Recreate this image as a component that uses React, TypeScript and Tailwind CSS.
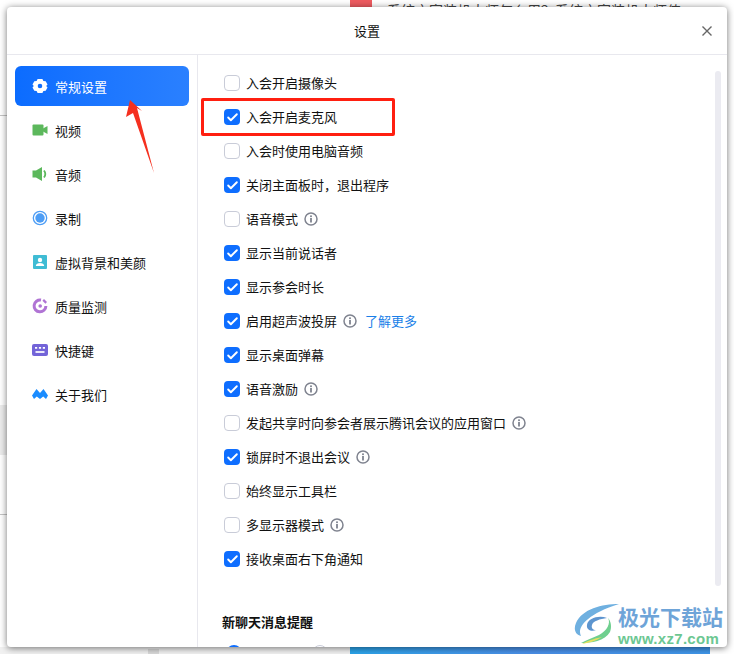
import { Check } from "lucide-react";

const cjk = "font-['Microsoft_YaHei','Noto_Sans_CJK_SC','Noto_Sans',sans-serif]";

function GearIcon() {
  return (
    <svg width="16" height="16" viewBox="0 0 16 16" className="shrink-0">
      <path
        fillRule="evenodd"
        fill="#fff"
        d="M5.600 1h4.800l1 1.900 2.300.3 1.800 3.200L14.200 8l1.300 1.600-1.800 3.200-2.300.3-1 1.900H5.600l-1-1.900-2.300-.3L.5 9.600 1.800 8 .5 6.400l1.800-3.200 2.300-.3zM8 5.700a2.300 2.300 0 1 0 0 4.600 2.300 2.300 0 0 0 0-4.600z"
      />
    </svg>
  );
}

function VideoIcon() {
  return (
    <svg width="16" height="16" viewBox="0 0 16 16" className="shrink-0">
      <rect x="0.500" y="2.500" width="11" height="11" rx="1" fill="#5cb85c" />
      <path d="M11 6.500l4.500-2.500v8l-4.500-2.500z" fill="#5cb85c" />
    </svg>
  );
}

function AudioIcon() {
  return (
    <svg width="16" height="16" viewBox="0 0 16 16" className="shrink-0">
      <path d="M.5 4.500h3.500l6-3.500v14l-6-3.500H.5z" fill="#5cb85c" />
      <path d="M12 4.500c1.500 2 1.500 5 0 7" fill="none" stroke="#5cb85c" strokeWidth="1.800" />
    </svg>
  );
}

function RecordIcon() {
  return (
    <svg width="16" height="16" viewBox="0 0 16 16" className="shrink-0">
      <circle cx="8" cy="8" r="6.700" fill="none" stroke="#4d9df5" strokeWidth="1.300" />
      <circle cx="8" cy="8" r="4.700" fill="#4d9df5" />
    </svg>
  );
}

function PortraitIcon() {
  return (
    <svg width="16" height="16" viewBox="0 0 16 16" className="shrink-0">
      <rect x="1" y="1" width="14" height="14" rx="1" fill="#3fbcd4" />
      <circle cx="8" cy="6" r="2.200" fill="#fff" />
      <path d="M3.800 12c0-2 2-3 4.200-3s4.200 1 4.200 3z" fill="#fff" />
    </svg>
  );
}

function QualityIcon() {
  return (
    <svg width="16" height="16" viewBox="0 0 16 16" className="shrink-0">
      <path d="M9 2.100A5.900 5.900 0 1 0 13.900 8" fill="none" stroke="#b074d4" strokeWidth="3" />
      <circle cx="8.200" cy="8" r="1.800" fill="#b074d4" />
      <path d="M11.200 1.900l3 3" stroke="#b074d4" strokeWidth="2.200" />
    </svg>
  );
}

function KeyboardIcon() {
  return (
    <svg width="16" height="12" viewBox="0 0 16 12" className="shrink-0">
      <rect width="16" height="12" rx="2" fill="#7364d8" />
      <path d="M3 3.800h2.200M6.900 3.800h2.200M10.800 3.800H13" stroke="#fff" strokeWidth="1.700" />
      <path d="M3.500 8h9" stroke="#fff" strokeWidth="1.700" />
    </svg>
  );
}

function AboutIcon() {
  return (
    <svg width="16" height="12" viewBox="0 0 16 12" className="shrink-0">
      <path
        d="M0 7.500L4.500 1 8 5l3.500-4L16 7.500 14 11l-2.800-2.500L8 11 4.800 8.500 2 11z"
        fill="#1a8cff"
      />
    </svg>
  );
}

function InfoIcon() {
  return (
    <svg width="14" height="14" viewBox="0 0 14 14" className="shrink-0">
      <circle cx="7" cy="7" r="6" fill="none" stroke="#7f838f" strokeWidth="1.500" />
      <rect x="6.100" y="6" width="1.800" height="4.500" fill="#7f838f" />
      <rect x="6.100" y="3.400" width="1.800" height="1.700" fill="#7f838f" />
    </svg>
  );
}

function WatermarkLogo() {
  return (
    <svg width="46" height="42" viewBox="0 0 46 42" className="shrink-0">
      <path d="M45 1C28 1 8 6 2 20c-3 7 0 12 5 13C3 26 10 12 45 1z" fill="#6fb0e0" />
      <path d="M33 15c-8-3-19 0-20 7-1 5 5 7 9 5-3 0-5-2-4-5 1-4 8-6 15-7z" fill="#5d95cf" />
      <path d="M34 15c3 5-1 13-9 17-6 3-13 5-18 8 10 0 24-2 29-11 2-5 1-11-2-14z" fill="#6fcf8f" />
      <path d="M8 41c6-1 14-3 20-7-5 1-13 3-20 7z" fill="#e6e060" />
    </svg>
  );
}

const menu = [
  { label: "常规设置", icon: <GearIcon />, active: true },
  { label: "视频", icon: <VideoIcon /> },
  { label: "音频", icon: <AudioIcon /> },
  { label: "录制", icon: <RecordIcon /> },
  { label: "虚拟背景和美颜", icon: <PortraitIcon /> },
  { label: "质量监测", icon: <QualityIcon /> },
  { label: "快捷键", icon: <KeyboardIcon /> },
  { label: "关于我们", icon: <AboutIcon /> },
];

const options = [
  { label: "入会开启摄像头", checked: false },
  { label: "入会开启麦克风", checked: true },
  { label: "入会时使用电脑音频", checked: false },
  { label: "关闭主面板时，退出程序", checked: true },
  { label: "语音模式", checked: false, info: true },
  { label: "显示当前说话者", checked: true },
  { label: "显示参会时长", checked: true },
  { label: "启用超声波投屏", checked: true, info: true, more: true },
  { label: "显示桌面弹幕", checked: true },
  { label: "语音激励", checked: true, info: true },
  { label: "发起共享时向参会者展示腾讯会议的应用窗口", checked: false, info: true },
  { label: "锁屏时不退出会议", checked: true, info: true },
  { label: "始终显示工具栏", checked: false },
  { label: "多显示器模式", checked: false, info: true },
  { label: "接收桌面右下角通知", checked: true },
];

function Checkbox({ checked }: { checked: boolean }) {
  if (checked) {
    return (
      <span className="flex h-4 w-4 shrink-0 items-center justify-center rounded bg-[#0e6eff]">
        <Check size={13} strokeWidth={3.500} color="#fff" />
      </span>
    );
  }
  return <span className="h-4 w-4 shrink-0 rounded border border-[#c9ccd8] bg-white" />;
}

export default function App() {
  return (
    <div className={`relative h-[654px] w-[734px] overflow-hidden bg-white ${cjk}`}>
      {/* page behind the dialog */}
      <div className="flex h-[654px] flex-col">
        <div className="flex h-[7px] overflow-hidden pl-[350px]">
          <span className="h-[7px] w-[22px] shrink-0 bg-[#ee5b60]" />
          <span className="ml-[15px] mt-[2px] text-[14px] leading-[16px] whitespace-nowrap text-[#444]">
            系统之家装机大师怎么用？系统之家装机大师值
          </span>
        </div>
        <div className="flex h-[640px] flex-col">
          <div className="h-[109px] w-[7px] border-b border-[#c4c4c4]" />
          <div className="mt-[289px] h-[50px] w-[7px] bg-[#ececec]" />
          <div className="h-[60px] w-[7px] border-b border-[#c4c4c4]" />
        </div>
        <div className="flex h-[7px] pl-[350px]">
          <span className="h-[7px] w-[360px] bg-gradient-to-r from-[#2aa4ea] via-[#4a8fe8] to-[#3f97ea]" />
        </div>
      </div>
      <div className="absolute bottom-0 left-0 flex h-[7px] w-[350px] bg-[#f1f1f1] pl-[148px]">
        <span className="mt-[2px] h-[5px] w-[11px] bg-[#d8d8d8]" />
      </div>

      {/* dialog */}
      <div className="absolute left-[7px] top-[7px] flex h-[640px] w-[720px] flex-col overflow-hidden rounded bg-white shadow-[0_1px_7px_rgba(0,0,0,0.55)]">
        <div className="relative flex h-[48px] shrink-0 items-center justify-center border-b border-[#e8e8ee] text-[13px] text-[#111]">
          设置
          <svg width="12" height="12" viewBox="0 0 12 12" className="absolute right-[14px] top-[18px]">
            <path d="M1.500 1.500l9 9M10.500 1.500l-9 9" stroke="#666" strokeWidth="1.400" fill="none" />
          </svg>
        </div>

        <div className="flex min-h-0 flex-1">
          <aside className="flex w-[191px] shrink-0 flex-col gap-1 border-r border-[#e8e8ee] px-2 pt-[11px]">
            {menu.map((item) => (
              <div
                key={item.label}
                className={
                  item.active
                    ? "flex h-10 items-center gap-[8px] rounded-md bg-gradient-to-r from-[#0b6cff] to-[#2a80ff] pl-[17px] text-[13px] text-white"
                    : "flex h-10 items-center gap-[8px] pl-[17px] text-[13px] text-[#111]"
                }
              >
                <span className="flex w-[15px] justify-center">{item.icon}</span>
                <span className="pt-px">{item.label}</span>
              </div>
            ))}
          </aside>

          <main className="flex min-w-0 flex-1 pl-[24px] pr-[6px]">
            <div className="min-w-0 flex-1 pl-[2px] pt-[11px]">
              {options.map((opt) => (
                <div key={opt.label} className="flex h-[34px] items-center text-[13px] text-[#111]">
                  <Checkbox checked={opt.checked} />
                  <span className="ml-[6px] whitespace-nowrap">{opt.label}</span>
                  {opt.info && (
                    <span className="ml-[6px]">
                      <InfoIcon />
                    </span>
                  )}
                  {opt.more && <span className="ml-[8px] text-[#1a7fe8]">了解更多</span>}
                </div>
              ))}
              <div className="-ml-[2px] mt-[36px] text-[13px] font-bold text-[#111]">新聊天消息提醒</div>
              <div className="mt-[13px] flex gap-[70px] pl-[2px]">
                <span className="h-4 w-4 shrink-0 rounded-full bg-[#0e6eff]" />
                <span className="h-4 w-4 shrink-0 rounded-full border border-[#c9ccd8]" />
              </div>
            </div>
            <div className="mt-[16px] h-[515px] w-[6px] shrink-0 rounded-sm bg-[#ebebf1]" />
          </main>
        </div>
      </div>

      {/* red annotation, drawn over the screenshot */}
      <div className="absolute left-[201px] top-[98px] h-[38px] w-[194px] rounded-[2px] border-[3px] border-[#ff1f10]" />
      <svg width="40" height="80" viewBox="0 0 40 80" className="absolute left-[120px] top-[98px]">
        <path d="M10 2L22 13 17 10 34 75 13 15 6 19z" fill="#f5301f" />
      </svg>

      {/* watermark */}
      <div className="absolute left-[574px] top-[603px] flex items-start">
        <WatermarkLogo />
        <div className="-ml-[2px] flex flex-col">
          <span className="h-[26px] text-[21px] leading-[26px] font-bold whitespace-nowrap text-[#6ea4d8]">极光下载站</span>
          <span className="mt-[2px] h-[15px] font-['Liberation_Sans',sans-serif] text-[15px] leading-[15px] font-bold tracking-[0.3px] whitespace-nowrap text-[#6cc792]">
            www.xz7.com
          </span>
        </div>
      </div>
    </div>
  );
}
